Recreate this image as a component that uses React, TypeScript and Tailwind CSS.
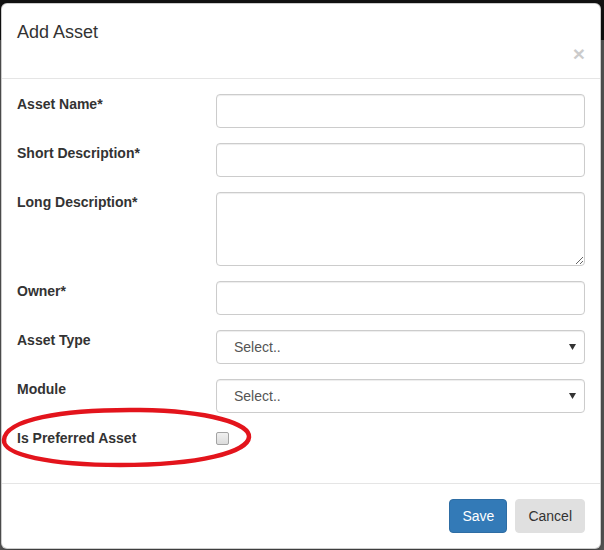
import React from 'react';

const fields = [
  { label: 'Asset Name*', kind: 'input' },
  { label: 'Short Description*', kind: 'input' },
  { label: 'Long Description*', kind: 'textarea' },
  { label: 'Owner*', kind: 'input' },
  { label: 'Asset Type', kind: 'select' },
  { label: 'Module', kind: 'select' },
];

const control =
  'w-full border border-[#ccc] rounded-[4px] bg-white shadow-[inset_0_1px_1px_rgba(0,0,0,0.075)] text-[14px] text-[#555] outline-none';

function SelectBox() {
  return (
    <div className={`${control} h-[34px] flex items-center justify-between pl-[17px] pr-[8px]`}>
      <span>Select..</span>
      <svg width="7" height="6" viewBox="0 0 7 6">
        <polygon points="0,0 7,0 3.5,6" fill="#333" />
      </svg>
    </div>
  );
}

export default function App() {
  return (
    <div className="relative w-[604px] h-[550px] overflow-hidden bg-[linear-gradient(to_bottom,#131313_0,#131313_40px,#626262_40px)] pt-[3px] pl-[1px] font-['Liberation_Sans',Arial,sans-serif]">
      <div className="w-[600px] bg-white border border-black/20 rounded-[6px] shadow-[0_5px_15px_rgba(0,0,0,0.5)]">
        {/* header */}
        <div className="px-[15px] pt-[15px] pb-[14px] border-b border-[#e5e5e5]">
          <h4 className="text-[18px] leading-[26px] text-[#333] font-normal">Add Asset</h4>
          <div className="flex justify-end h-[19px]">
            <button className="-mt-[2px] h-[21px] text-[21px] leading-none font-bold text-black opacity-20">
              ×
            </button>
          </div>
        </div>

        {/* body */}
        <div className="px-[15px] pt-[15px] pb-[15px]">
          {fields.map((f) => (
            <div key={f.label} className="grid grid-cols-[199px_1fr] mb-[15px]">
              <label className="text-[14px] leading-[20px] font-bold text-[#333]">{f.label}</label>
              {f.kind === 'input' && <input type="text" className={`${control} h-[34px] px-3`} />}
              {f.kind === 'textarea' && (
                <textarea rows={3} className={`${control} h-[74px] px-3 py-[6px] resize-y block`} />
              )}
              {f.kind === 'select' && <SelectBox />}
            </div>
          ))}
          <div className="grid grid-cols-[199px_1fr] h-[25px] mb-[15px]">
            <label className="text-[14px] leading-[20px] font-bold text-[#333]">Is Preferred Asset</label>
            <div className="pt-[4px]">
              <div className="w-[13px] h-[13px] border border-[#a3a3a3] rounded-[2px] bg-[linear-gradient(to_bottom,#f0f0f0,#dcdcdc)]" />
            </div>
          </div>
        </div>

        {/* footer */}
        <div className="flex justify-end gap-[8px] px-[15px] py-[15px] border-t border-[#e5e5e5]">
          <button className="h-[34px] px-[12px] rounded-[4px] bg-[#337ab7] border border-[#2e6da4] text-white text-[14px]">
            Save
          </button>
          <button className="h-[34px] px-[12px] rounded-[4px] bg-[#e0e0e0] border border-[#e0e0e0] text-[#333] text-[14px]">
            Cancel
          </button>
        </div>
      </div>

      {/* red annotation ring */}
      <svg className="absolute left-0 top-0 pointer-events-none" width="604" height="550">
        <path
          d="M4 440 C 5 420, 60 409, 140 410 C 210 411, 250 424, 249 437 C 248 452, 200 465, 120 465 C 50 465, 3 455, 4 440 Z"
          fill="none"
          stroke="#e3141c"
          strokeWidth="4.5"
        />
      </svg>
    </div>
  );
}
